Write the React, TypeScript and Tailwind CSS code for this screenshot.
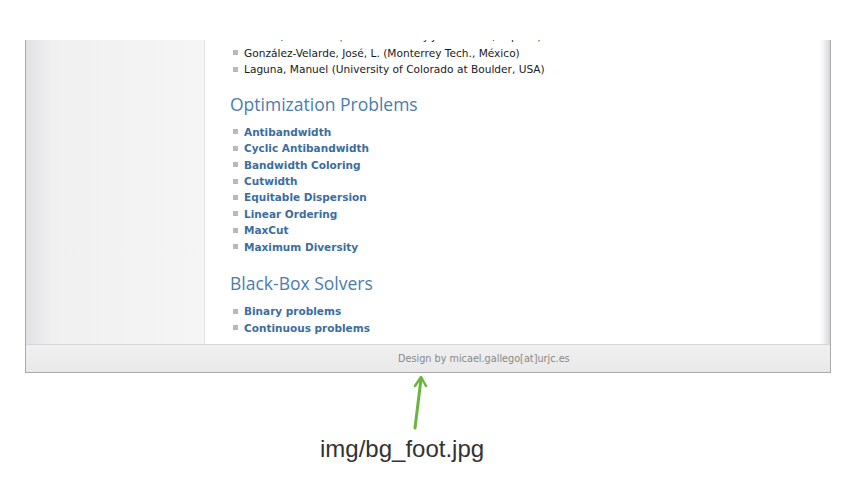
import React from "react";

const people = [
  "Duarte, Abraham (Universidad Rey Juan Carlos, España)",
  "González-Velarde, José, L. (Monterrey Tech., México)",
  "Laguna, Manuel (University of Colorado at Boulder, USA)",
];

const problems = [
  "Antibandwidth",
  "Cyclic Antibandwidth",
  "Bandwidth Coloring",
  "Cutwidth",
  "Equitable Dispersion",
  "Linear Ordering",
  "MaxCut",
  "Maximum Diversity",
];

const solvers = ["Binary problems", "Continuous problems"];

function Bullet() {
  return <span className="inline-block w-[5px] h-[5px] bg-[#b8b8b8] mr-[6px] mb-[2px] align-middle" />;
}

export default function App() {
  return (
    <div className="relative w-[844px] h-[489px] bg-white overflow-hidden" style={{ fontFamily: '"DejaVu Sans", sans-serif' }}>
      <div className="ml-[25px] mt-[40px] w-[806px] border-l border-r border-b border-[#a9a9a9] flex flex-col">
        <div className="flex h-[304px] overflow-hidden">
          <div className="w-[179px] bg-gradient-to-r from-[#e2e2e4] via-[#f0f0f1] via-15% to-[#f5f5f6] border-r border-[#e2e2e4]" />
          <div className="flex-1 bg-white pl-[28px] overflow-hidden">
            <ul className="mt-[-12px] text-[10.6px] leading-[16.6px] text-[#1a1a1a]">
              {people.map((p) => (
                <li key={p} className="whitespace-nowrap">
                  <Bullet />
                  {p}
                </li>
              ))}
            </ul>
            <h2 className="mt-[14px] ml-[-3px] text-[17.5px] leading-[24px] text-[#4b7cad]" style={{ fontFamily: '"Open Sans", sans-serif' }}>
              Optimization Problems
            </h2>
            <ul className="mt-[8px] text-[10.5px] leading-[16.4px] font-bold text-[#3d6d9e]">
              {problems.map((p) => (
                <li key={p} className="whitespace-nowrap">
                  <Bullet />
                  {p}
                </li>
              ))}
            </ul>
            <h2 className="mt-[16px] ml-[-3px] text-[17.5px] leading-[24px] text-[#4b7cad]" style={{ fontFamily: '"Open Sans", sans-serif' }}>
              Black-Box Solvers
            </h2>
            <ul className="mt-[8px] text-[10.5px] leading-[16.6px] font-bold text-[#3d6d9e]">
              {solvers.map((p) => (
                <li key={p} className="whitespace-nowrap">
                  <Bullet />
                  {p}
                </li>
              ))}
            </ul>
          </div>
          <div className="w-[11px] bg-gradient-to-r from-white via-[#f4f4f5] via-40% to-[#d6d6d8]" />
        </div>
        <div className="h-[28px] border-t border-[#d6d6d8] bg-gradient-to-b from-[#f0f0f1] to-[#e9e9ea] pl-[372px] pt-[1px] flex items-center">
          <span className="text-[9.7px] text-[#888]">Design by micael.gallego[at]urjc.es</span>
        </div>
      </div>
      <svg className="absolute left-[405px] top-[372px]" width="30" height="62" viewBox="0 0 30 62">
        <path d="M10 56 L16 7" stroke="#6db33f" strokeWidth="3" strokeLinecap="round" fill="none" />
        <path d="M10 14 L16 5 L21 14" stroke="#6db33f" strokeWidth="2.5" strokeLinecap="round" strokeLinejoin="round" fill="none" />
      </svg>
      <div className="mt-[62px] pl-[320px] text-[24px] leading-[28px] text-[#333]" style={{ fontFamily: '"Liberation Sans", Arial, sans-serif' }}>
        img/bg_foot.jpg
      </div>
    </div>
  );
}
